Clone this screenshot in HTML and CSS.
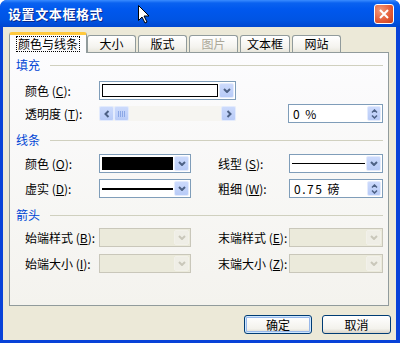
FILE: index.html
```html
<!DOCTYPE html>
<html lang="zh-CN">
<head>
    <meta charset="UTF-8" />
    <title>设置文本框格式</title>
    <link rel="stylesheet" href="styles.css">
</head>
<body>
    <div class="window">
        <div class="titlebar">
            <span class="title">设置文本框格式</span>
            <span class="close">
                <svg width="10" height="10" viewBox="0 0 10 10"><path d="M1 1l8 8M9 1l-8 8" stroke="#fff" stroke-width="2"/></svg>
            </span>
        </div>

        <!-- mouse pointer over the title bar -->
        <svg class="cursor" width="12" height="19" viewBox="0 0 12 19">
            <path d="M0.5 0.5v15l3.5-3.5 3 6 2-1-3-6h5z" fill="#fff" stroke="#000" stroke-width="1"/>
        </svg>

        <div class="body">
            <div class="tabs">
                <div class="tab active"><span class="focus">颜色与线条</span></div>
                <div class="tab">大小</div>
                <div class="tab">版式</div>
                <div class="tab off">图片</div>
                <div class="tab">文本框</div>
                <div class="tab">网站</div>
            </div>

            <div class="panel">
                <div class="group">填充</div>
                <div class="row gap9">
                    <span class="lbl">颜色 (<u>C</u>):</span>
                    <div class="combo wide">
                        <div class="field"><div class="swatch white"></div></div>
                        <div class="drop"><svg width="8" height="5" viewBox="0 0 8 5"><path d="M1 1l3 3 3-3" fill="none" stroke="#4D6185" stroke-width="2"/></svg></div>
                    </div>
                </div>
                <div class="row gap4">
                    <span class="lbl">透明度 (<u>T</u>):</span>
                    <div class="scroll">
                        <div class="sbtn"><svg width="6" height="8" viewBox="0 0 6 8"><path d="M4.5 1L1.5 4l3 3" fill="none" stroke="#4D6185" stroke-width="2"/></svg></div>
                        <div class="sbtn thumb"></div>
                        <div class="track"></div>
                        <div class="sbtn"><svg width="6" height="8" viewBox="0 0 6 8"><path d="M1.5 1l3 3-3 3" fill="none" stroke="#4D6185" stroke-width="2"/></svg></div>
                    </div>
                    <div class="spin far">
                        <span class="val">0 %</span>
                        <div class="spinbtn">
                            <svg width="7" height="4" viewBox="0 0 7 4"><path d="M1 3.5l2.5-2.5 2.5 2.5" fill="none" stroke="#4D6185" stroke-width="1.5"/></svg>
                            <svg width="7" height="4" viewBox="0 0 7 4"><path d="M1 0.5l2.5 2.5 2.5-2.5" fill="none" stroke="#4D6185" stroke-width="1.5"/></svg>
                        </div>
                    </div>
                </div>

                <div class="group gap10">线条</div>
                <div class="row gap7">
                    <span class="lbl">颜色 (<u>O</u>):</span>
                    <div class="combo">
                        <div class="field"><div class="swatch black"></div></div>
                        <div class="drop"><svg width="8" height="5" viewBox="0 0 8 5"><path d="M1 1l3 3 3-3" fill="none" stroke="#4D6185" stroke-width="2"/></svg></div>
                    </div>
                    <span class="lbl right">线型 (<u>S</u>):</span>
                    <div class="combo right">
                        <div class="field"><div class="stroke thin"></div></div>
                        <div class="drop"><svg width="8" height="5" viewBox="0 0 8 5"><path d="M1 1l3 3 3-3" fill="none" stroke="#4D6185" stroke-width="2"/></svg></div>
                    </div>
                </div>
                <div class="row gap6">
                    <span class="lbl">虚实 (<u>D</u>):</span>
                    <div class="combo">
                        <div class="field"><div class="stroke thick"></div></div>
                        <div class="drop"><svg width="8" height="5" viewBox="0 0 8 5"><path d="M1 1l3 3 3-3" fill="none" stroke="#4D6185" stroke-width="2"/></svg></div>
                    </div>
                    <span class="lbl right">粗细 (<u>W</u>):</span>
                    <div class="spin right">
                        <span class="val">0.75 磅</span>
                        <div class="spinbtn">
                            <svg width="7" height="4" viewBox="0 0 7 4"><path d="M1 3.5l2.5-2.5 2.5 2.5" fill="none" stroke="#4D6185" stroke-width="1.5"/></svg>
                            <svg width="7" height="4" viewBox="0 0 7 4"><path d="M1 0.5l2.5 2.5 2.5-2.5" fill="none" stroke="#4D6185" stroke-width="1.5"/></svg>
                        </div>
                    </div>
                </div>

                <div class="group gap10">箭头</div>
                <div class="row gap6">
                    <span class="lbl">始端样式 (<u>B</u>):</span>
                    <div class="combo off">
                        <div class="field"></div>
                        <div class="drop"><svg width="8" height="5" viewBox="0 0 8 5"><path d="M1 1l3 3 3-3" fill="none" stroke="#C9C7BA" stroke-width="2"/></svg></div>
                    </div>
                    <span class="lbl right">末端样式 (<u>E</u>):</span>
                    <div class="combo right off">
                        <div class="field"></div>
                        <div class="drop"><svg width="8" height="5" viewBox="0 0 8 5"><path d="M1 1l3 3 3-3" fill="none" stroke="#C9C7BA" stroke-width="2"/></svg></div>
                    </div>
                </div>
                <div class="row gap7">
                    <span class="lbl">始端大小 (<u>I</u>):</span>
                    <div class="combo off">
                        <div class="field"></div>
                        <div class="drop"><svg width="8" height="5" viewBox="0 0 8 5"><path d="M1 1l3 3 3-3" fill="none" stroke="#C9C7BA" stroke-width="2"/></svg></div>
                    </div>
                    <span class="lbl right">末端大小 (<u>Z</u>):</span>
                    <div class="combo right off">
                        <div class="field"></div>
                        <div class="drop"><svg width="8" height="5" viewBox="0 0 8 5"><path d="M1 1l3 3 3-3" fill="none" stroke="#C9C7BA" stroke-width="2"/></svg></div>
                    </div>
                </div>
            </div>

            <div class="footer">
                <button class="btn default">确定</button>
                <button class="btn">取消</button>
            </div>
        </div>
    </div>
</body>
</html>
```
FILE: styles.css
```css
* {
    box-sizing: border-box;
}

body {
    margin: 0;
    background: #fff;
    font-family: "Noto Sans CJK SC", "Liberation Sans", sans-serif;
    font-size: 12px;
    color: #000;
}

/* window frame */
.window {
    position: relative;
    width: 400px;
    height: 343px;
    display: flex;
    flex-direction: column;
    background: #0842D8;
    border-radius: 7px 7px 0 0;
    overflow: hidden;
}

.titlebar {
    height: 27px;
    flex: none;
    display: flex;
    align-items: center;
    padding: 0 6px 0 8px;
    color: #fff;
    background: linear-gradient(#3A8CFF 0, #0A62F0 3px, #0058EE 9px, #0054E3 20px, #0047D0 27px);
}

.title {
    flex: 1;
    font-size: 13px;
    font-weight: bold;
    letter-spacing: 0.6px;
    line-height: 1;
    text-shadow: 1px 1px 0 #0A2A8C;
}

.close {
    width: 20px;
    height: 20px;
    display: flex;
    align-items: center;
    justify-content: center;
    border: 1px solid #fff;
    border-radius: 3px;
    background: radial-gradient(circle at 30% 30%, #F29A7A, #E35A36 60%, #C8401C);
}

.cursor {
    position: absolute;
    left: 138px;
    top: 5px;
}

.body {
    flex: 1;
    margin: 0 4px 3px 3px;
    padding: 5px 7px 0 6px;
    background: #ECE9D8;
    display: flex;
    flex-direction: column;
}

/* tabs */
.tabs {
    display: flex;
    align-items: flex-end;
    height: 20px;
    gap: 2px;
    padding-left: 2px;
}

.tab {
    height: 17px;
    min-width: 49px;
    padding: 0 6px;
    display: flex;
    align-items: center;
    justify-content: center;
    line-height: 1;
    border: 1px solid #919B9C;
    border-bottom: none;
    border-radius: 3px 3px 0 0;
    background: linear-gradient(#FFFFFF, #F4F3EE 70%, #E8E6DC);
}

.tab.active {
    position: relative;
    z-index: 1;
    height: 21px;
    margin: 0 -2px -1px -2px;
    padding: 0 8px;
    border-top: 3px solid #FFC83C;
    background: #FCFCFE;
}

.tab.off {
    color: #ACA899;
}

.focus {
    outline: 1px dotted #000;
    outline-offset: 1px;
}

/* tab page */
.panel {
    height: 254px;
    border: 1px solid #919B9C;
    padding: 5px 5px 0 6px;
    background: linear-gradient(#FCFCFE, #F4F3EE);
}

.group {
    display: flex;
    align-items: center;
    height: 14px;
    color: #0046D5;
    line-height: 1;
}

.group::after {
    content: "";
    flex: 1;
    margin-left: 10px;
    border-top: 1px solid #D0D0BF;
}

.row {
    display: flex;
    align-items: center;
    height: 19px;
    padding-left: 9px;
    line-height: 1;
}

.gap4 { margin-top: 4px; }
.gap6 { margin-top: 6px; }
.gap7 { margin-top: 7px; }
.gap9 { margin-top: 9px; }
.gap10 { margin-top: 10px; }

.lbl {
    width: 74px;
    white-space: nowrap;
}

.lbl.right {
    width: 71px;
    margin-left: 27px;
}

/* combo boxes */
.combo {
    width: 92px;
    height: 19px;
    display: flex;
    padding: 1px;
    border: 1px solid #7F9DB9;
    background: #fff;
}

.combo.wide {
    width: 137px;
}

.combo.right {
    width: 94px;
}

.field {
    flex: 1;
    display: flex;
    align-items: center;
    padding: 1px;
}

.drop {
    width: 15px;
    display: flex;
    align-items: center;
    justify-content: center;
    border: 1px solid #E3EBFD;
    border-radius: 2px;
    background: linear-gradient(#CCDAFC, #B8CBF7);
}

.swatch {
    width: 100%;
    height: 13px;
    border: 1px solid #000;
}

.swatch.white {
    background: #fff;
}

.swatch.black {
    background: #000;
}

.stroke {
    width: 100%;
    background: #000;
}

.stroke.thin {
    height: 1px;
}

.stroke.thick {
    height: 2px;
}

.combo.off {
    border-color: #C9C7BA;
    background: #EBEADB;
}

.combo.off .drop {
    border-color: #F2F1EA;
    background: #EFEEE6;
}

/* scroll bar */
.scroll {
    width: 137px;
    height: 15px;
    display: flex;
    background: #F6F5F1;
}

.sbtn {
    width: 15px;
    display: flex;
    align-items: center;
    justify-content: center;
    border: 1px solid #E3EBFD;
    border-radius: 2px;
    background: linear-gradient(#CCDAFC, #B8CBF7);
}

.thumb {
    background:
        repeating-linear-gradient(90deg, #8CA8E6 0 1px, transparent 1px 2px) center / 7px 6px no-repeat,
        linear-gradient(#CCDAFC, #B8CBF7);
}

.track {
    flex: 1;
}

/* spinners */
.spin {
    width: 95px;
    height: 19px;
    display: flex;
    align-items: center;
    padding: 1px;
    border: 1px solid #7F9DB9;
    background: #fff;
}

.spin.far {
    margin-left: 52px;
}

.spin.right {
    width: 94px;
}

.val {
    flex: 1;
    padding-left: 3px;
    letter-spacing: 1.5px;
    white-space: pre;
}

.spinbtn {
    width: 14px;
    height: 100%;
    display: flex;
    flex-direction: column;
    align-items: center;
    justify-content: center;
    gap: 2px;
    border: 1px solid #E3EBFD;
    border-radius: 2px;
    background: linear-gradient(#CCDAFC, #B8CBF7);
}

/* buttons */
.footer {
    display: flex;
    justify-content: flex-end;
    gap: 10px;
    margin-top: 9px;
    margin-right: -2px;
}

.btn {
    width: 69px;
    height: 19px;
    padding: 0;
    font: inherit;
    line-height: 1;
    color: #000;
    border: 1px solid #003C74;
    border-radius: 3px;
    background: linear-gradient(#FFFFFF, #F3F2EC 75%, #D8D3C8);
}

.btn.default {
    width: 68px;
    box-shadow: inset 0 0 0 1px #CEE7FF, inset 0 0 0 2px #98B8EA;
}
```
